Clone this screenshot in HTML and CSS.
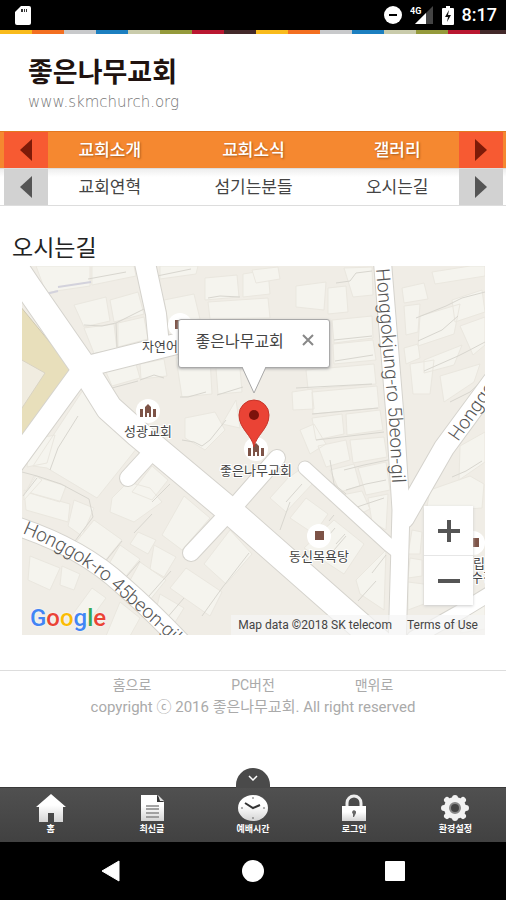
FILE: index.html
```html
<!DOCTYPE html>
<html lang="ko">
<head>
  <meta charset="UTF-8">
  <meta name="viewport" content="width=device-width, initial-scale=1.0">
  <title>좋은나무교회</title>
  <link rel="stylesheet" href="styles.css">
</head>
<body>

  <div class="status-bar">
    <svg class="status-card" width="16" height="19" viewBox="0 0 16 19"><path d="M6 0h8a2 2 0 0 1 2 2v15a2 2 0 0 1-2 2H2a2 2 0 0 1-2-2V6z" fill="#fff"/><path d="M6 3h2v3H6zM9 3h1v3H9zM11 3h1v3h-1z" fill="#333"/></svg>
    <div class="status-right">
      <svg width="18" height="18" viewBox="0 0 18 18"><circle cx="9" cy="9" r="9" fill="#fff"/><path d="M5 9h8" stroke="#000" stroke-width="2"/></svg>
      <svg width="24" height="20" viewBox="0 0 24 20">
        <path d="M23 1v18H5z" fill="#444"/><path d="M16 8v11H5z" fill="#fff"/>
        <text class="status-4g" x="0" y="9">4G</text>
      </svg>
      <svg width="12" height="19" viewBox="0 0 12 19"><path d="M4 0h4v2h3a1 1 0 0 1 1 1v15a1 1 0 0 1-1 1H1a1 1 0 0 1-1-1V3a1 1 0 0 1 1-1h3z" fill="#fff"/><path d="M7 4 3 11h3l-1 5 4-7H6z" fill="#111"/></svg>
      <span class="clock">8:17</span>
    </div>
  </div>

  <div class="stripes"></div>

  <header class="header">
    <a class="logo" href="#">
      <span class="logo-name">좋은나무교회</span>
      <span class="logo-url">www.skmchurch.org</span>
    </a>
  </header>

  <nav class="menu menu-main">
    <button class="arrow" type="button" aria-label="이전"><svg width="12" height="22" viewBox="0 0 12 22"><path d="M12 0v22L0 11z"/></svg></button>
    <ul>
      <li><a href="#">교회소개</a></li>
      <li><a href="#">교회소식</a></li>
      <li><a href="#">갤러리</a></li>
    </ul>
    <button class="arrow" type="button" aria-label="다음"><svg width="12" height="22" viewBox="0 0 12 22"><path d="M0 0v22l12-11z"/></svg></button>
  </nav>
  <nav class="menu menu-sub">
    <button class="arrow" type="button" aria-label="이전"><svg width="12" height="22" viewBox="0 0 12 22"><path d="M12 0v22L0 11z"/></svg></button>
    <ul>
      <li><a href="#">교회연혁</a></li>
      <li><a href="#">섬기는분들</a></li>
      <li><a href="#">오시는길</a></li>
    </ul>
    <button class="arrow" type="button" aria-label="다음"><svg width="12" height="22" viewBox="0 0 12 22"><path d="M0 0v22l12-11z"/></svg></button>
  </nav>

  <main>
    <h1>오시는길</h1>
    <div class="map">
      <svg class="map-canvas" viewBox="22 266 463 369">
        <rect x="22" y="266" width="463" height="369" fill="#f0ede6"/>

        <!-- buildings -->
        <g class="building">
          <path d="M36 266l54 0 0 20-34 5-10 2zM92 266l42 0 2 10-44 9zM74 305l32-8 4 24-26 6zM110 300l28-8 6 22-30 8zM84 328l30-4 3 26-22 6zM118 323l26-6 4 22-30 8z"/>
          <path d="M160 266l38 0-2 8-36 5zM164 300l30-6 6 25-32 4zM205 278l32-3 2 22-34 3zM243 274l25-4 2 24-27 3zM208 302l60-4 2 20-60 1z"/>
          <path d="M106 372l30-8 4 14-28 8zM140 364l24-5 3 17-26 3zM176 358l34 0 2 36-30 3zM216 368l24 0 2 24-24 2zM185 418l30-6 10 18-20 20-20-12zM236 400l-14 24 18 4z"/>
          <path d="M252 270l26-3 2 12-24 4zM296 286l30-4-2 28-28-3zM328 288l18-2 2 26-20 2zM344 268l28-1 1 28-20 2zM332 320l40-4 1 22-39 5zM333 344l40-4 3 20-42 4zM306 370l68-6 2 20-68 5zM292 392l20-3 2 20-21 1zM312 392l65-6 2 22-66 6zM312 418l30-4 2 20-28 6zM346 414l34-4 3 20-36 5zM300 430l14-6 12 20-16 10zM318 446l28-6 4 20-24 7zM350 440l34-3 3 20-34 6z"/>
          <path d="M330 470l24-6 6 22-20 6zM358 468l28-6 4 28-24 5zM342 495l20-4 8 18-16 8zM368 498l20-4-2 36-14-8z"/>
          <path d="M402 288l22-5 4 16-24 4zM432 272l38-6 15 0 0 10-50 8zM404 306l16-2-2 28-12 3zM420 316l40-12-6 30-36 12zM452 300l30-10 3 22-30 10zM404 348l14-4 2 14-14 6zM410 364l24-4-4 34-17 0zM460 326l25-9 0 28-12 10zM440 376l40-12-6 18-30 20zM424 360l38-15-8 20-30 8z"/>
          <path d="M83 390l16 26 38 32-40 50-50-30-14-2zM30 440l25-5-8 28-20 4zM34 476l32 10-6 16-34-10zM24 490l10 4 36 10-2 18-42-12zM74 500l20 8-12 28-14-10z"/>
          <path d="M112 498l16-16 22 6 12 14-28 20-24-10zM152 466l16 14-16 20-20-8zM184 496l26 22-28 32-20-15zM138 532l18 8-8 14-18-10zM94 520l28 20-18 22-28-20zM120 545l20 14-18 22-16-12zM154 545l22 12-12 20-14-8zM140 562l26 18-16 20-22-16zM186 568l36 24-12 24-40-28zM230 530l22 24-26 30-22-20zM160 594l24 14-10 16-18-14z"/>
          <path d="M30 556l30 12-10 22-22-10zM62 566l18 8-6 16-14-5zM92 588l14 10-22 30-14-10zM120 602l20 16-10 18-24 0zM24 500l18-20-6-4-12 18z"/>
          <path d="M288 478l14-10 12 14-28 30-16-14zM306 498l22 16-14 20-24-16zM334 520l30 24-20 30-40-26zM356 580l30-30-2 60-24-16z"/>
          <path d="M460 446l25-14 0 30-26 18zM430 490l40-14 14 8-2 24-56 4zM412 530l10 2-2 22-12 0zM410 558l12 2 0 16-14 2zM408 582l16 2 0 20-16 6zM470 612l15-8 0 25-25 4z"/>
        </g>

        <!-- plot lines -->
        <g class="plot">
          <path d="M88 279l38-7M157 276l34-7M84 325l18 1 14-3 28-14M116 323l1 24M92 354l24-5 31-8M112 388l26-7M140 380l14-5 10 3M180 397h8l18-5M217 395l26-8M208 298l12-2 20 1M182 440l12 2 8 4 8-6 8-10 8-10M50 470l8-22 20-32M336 283l14-2 6-8 16-2M334 340l38-4M335 361l38-6M296 388l76-4M312 414l66-6M316 440l68-8"/>
          <path d="M416 318l30-12 16-8 23-6M418 341l24-11 16-14M424 371l34-15 8-4 19-10M450 402l20-10 15-14M452 477l14-6 16-10M170 484l-18 18M152 514l-18 19M122 541l-18 22M140 561l-19 22M171 571l-22 25M184 598l-18 21M249 553l-27 35-20 28M335 528l-12 14M346 536l-12 14M386 555l-14 18M376 581l-18 20M334 515l-5 6M345 534l-9 10M22 472l15 4 24 8 28 15 4 18-18 24M37 478l-14 18M290 502l-10 28M302 484l-16 18M346 490l20-6 20-4M354 508l30-10M344 470l20-5 24-5M330 460l4 24 12 10"/>
        </g>
        <path d="M46 294l12-3M58 287l33-5" stroke="#d3d2dc" stroke-width="2"/>

        <path d="M20 306l51 62-51 72z" fill="#e8dfbb" stroke="#cfc8b0"/>
        <path d="M20 359l25 14-25 38z" fill="#f0ece0" stroke="#d9d3c2"/>

        <!-- roads: grey casing below, white surface above -->
        <g class="road-edge">
          <path d="M10 260l18 27 18 26 34 49 14 22 15 24 29 26 92 77 126 111 40 35" stroke-width="28"/>
          <path d="M143 254l13 60 3 32" stroke-width="22"/>
          <path d="M88 366l92-23" stroke-width="22"/>
          <path d="M82 370l-70 96" stroke-width="22"/>
          <path d="M150 454l-22 24" stroke-width="18"/>
          <path d="M234 507l-43 46" stroke-width="18"/>
          <path d="M234 507l43-49" stroke-width="18"/>
          <path d="M305 468l84 77 10 8" stroke-width="15"/>
          <path d="M382 256l13 160 6 94-4 140" stroke-width="19"/>
          <path d="M494 380l-50 68-40 70" stroke-width="22"/>
          <path d="M414 638l46-26 36-22" stroke-width="16"/>
          <path d="M10 524q70 22 112 61 30 26 62 60" stroke-width="20"/>
        </g>
        <g class="road">
          <path d="M10 260l18 27 18 26 34 49 14 22 15 24 29 26 92 77 126 111 40 35" stroke-width="26"/>
          <path d="M143 254l13 60 3 32" stroke-width="20"/>
          <path d="M88 366l92-23" stroke-width="20"/>
          <path d="M82 370l-70 96" stroke-width="20"/>
          <path d="M150 454l-22 24" stroke-width="16"/>
          <path d="M234 507l-43 46" stroke-width="16"/>
          <path d="M234 507l43-49" stroke-width="16"/>
          <path d="M305 468l84 77 10 8" stroke-width="13"/>
          <path d="M382 256l13 160 6 94-4 140" stroke-width="17"/>
          <path d="M494 380l-50 68-40 70" stroke-width="20"/>
          <path d="M414 638l46-26 36-22" stroke-width="14"/>
          <path d="M10 524q70 22 112 61 30 26 62 60" stroke-width="18"/>
        </g>

        <!-- road names -->
        <defs>
          <path id="road-5" d="M376 269l13 150 5 100"/>
          <path id="road-45" d="M22 533q62 26 100 64 28 24 60 54"/>
          <path id="road-ne" d="M458 442l52-74"/>
        </defs>
        <g class="road-name">
          <text><textPath href="#road-5">Honggokjung-ro 5beon-gil</textPath></text>
          <text><textPath href="#road-45">Honggok-ro 45beon-gil</textPath></text>
          <text><textPath href="#road-ne">Honggok</textPath></text>
        </g>

        <!-- places -->
        <g fill="#fff">
          <circle cx="180" cy="325" r="12"/><circle cx="148" cy="411" r="12"/><circle cx="256" cy="449" r="12"/>
          <circle cx="319" cy="536" r="12"/><circle cx="473" cy="543" r="12"/>
        </g>
        <g fill="#7d5347">
          <path d="M175 320h6v9h-6z"/>
          <path id="church" d="M140 409h3v8h-3zM145 417v-10l3-3 3 3v10h-2v-4h-2v4zM153 409h3v8h-3z"/>
          <use href="#church" x="108" y="39"/>
          <path d="M315 531h9v9h-9zM472 538h7v9h-7z"/>
        </g>
        <g class="place">
          <text x="142" y="351">자연어린이집</text>
          <text x="148" y="436" text-anchor="middle">성광교회</text>
          <text x="256" y="475" text-anchor="middle">좋은나무교회</text>
          <text x="319" y="561" text-anchor="middle">동신목욕탕</text>
          <text x="473" y="568">립</text>
          <text x="471" y="582">수정</text>
        </g>

        <!-- marker -->
        <path d="M254 447c-2-12-15-18-15-32a15 15 0 0 1 30 0c0 14-13 20-15 32z" fill="#ea4335" stroke="#c5352a"/>
        <circle cx="254" cy="415" r="5" fill="#7c120b"/>
      </svg>

      <div class="info">
        <span>좋은나무교회</span>
        <button type="button" aria-label="닫기"><svg width="12" height="12" viewBox="0 0 12 12"><path d="M1 1l10 10M11 1L1 11" stroke="#888" stroke-width="2"/></svg></button>
        <svg class="info-tail" width="26" height="28" viewBox="0 0 26 28"><path d="M1 0l12 27L25 0z" fill="#fff"/><path d="M1 1l12 26L25 1" fill="none" stroke="#a9a9a9"/></svg>
      </div>

      <div class="zoom">
        <button type="button" aria-label="확대"><svg width="22" height="22" viewBox="0 0 22 22"><path d="M0 11h22M11 0v22" stroke="#555" stroke-width="4"/></svg></button>
        <button type="button" aria-label="축소"><svg width="22" height="22" viewBox="0 0 22 22"><path d="M0 11h22" stroke="#555" stroke-width="4"/></svg></button>
      </div>

      <a class="google" href="#"><span class="blue">G</span><span class="red">o</span><span class="yellow">o</span><span class="blue">g</span><span class="green">l</span><span class="red">e</span></a>
      <div class="credits">
        <span>Map data ©2018 SK telecom</span>
        <a href="#">Terms of Use</a>
      </div>
    </div>
  </main>

  <footer class="footer">
    <div class="footer-links">
      <a href="#">홈으로</a>
      <a href="#">PC버전</a>
      <a href="#">맨위로</a>
    </div>
    <p>copyright ⓒ 2016 좋은나무교회. All right reserved</p>
  </footer>

  <nav class="tabs">
    <button class="tabs-toggle" type="button" aria-label="메뉴 닫기"><svg width="10" height="6" viewBox="0 0 10 6"><path d="M1 1l4 4 4-4" fill="none" stroke="#fff" stroke-width="1.5"/></svg></button>
    <svg class="defs" width="0" height="0"><defs><linearGradient id="shine" x1="0" y1="0" x2="0" y2="1"><stop offset=".4" stop-color="#fff"/><stop offset="1" stop-color="#d4d4d4"/></linearGradient></defs></svg>
    <a href="#">
      <svg width="30" height="28" viewBox="0 0 30 28"><path d="M15 0l15 13h-3v15h-9v-9h-6v9H3V13H0z" fill="url(#shine)"/></svg>
      <span>홈</span>
    </a>
    <a href="#">
      <svg width="30" height="28" viewBox="0 0 30 28"><path d="M4 1h16l7 7v19H4z" fill="url(#shine)"/><path d="M20 1v7h7z" fill="#333"/><path d="M21 1l6 6h-4z" fill="#ddd"/><path d="M9 12h13M9 15h13M9 19h13M9 23h13" stroke="#888" stroke-width="1.5"/></svg>
      <span>최신글</span>
    </a>
    <a href="#">
      <svg width="30" height="28" viewBox="0 0 30 28"><ellipse cx="15" cy="14" rx="15" ry="13" fill="url(#shine)"/><path d="M7 9l8 5 7-3" fill="none" stroke="#333" stroke-width="2"/><path d="M15 3v2M15 23v2M3 14h2M25 14h2" stroke="#666"/></svg>
      <span>예배시간</span>
    </a>
    <a href="#">
      <svg width="30" height="28" viewBox="0 0 30 28"><path d="M8 13V9a7 7 0 0 1 14 0v4" fill="none" stroke="#eee" stroke-width="3"/><path d="M3 12h24v15H3z" fill="url(#shine)"/><path d="M14 23v-3a2 2 0 1 1 3-1l-2 4z" fill="#666"/></svg>
      <span>로그인</span>
    </a>
    <a href="#">
      <svg width="30" height="28" viewBox="0 0 30 28"><circle cx="15" cy="14" r="11" fill="#f2f2f2"/><g stroke="#f2f2f2" stroke-width="6" stroke-linecap="round"><path d="M15 4v20M4 14h22M7 6l16 16M23 6L7 22"/></g><circle cx="15" cy="14" r="5" fill="#444" stroke="#888" stroke-width="2"/></svg>
      <span>환경설정</span>
    </a>
  </nav>

  <div class="system-nav">
    <button type="button" aria-label="뒤로"><svg width="20" height="22" viewBox="0 0 20 22"><path d="M18 1v20L1 11z" fill="#fff" stroke="#fff" stroke-linejoin="round"/></svg></button>
    <button type="button" aria-label="홈 화면"><svg width="22" height="22" viewBox="0 0 22 22"><circle cx="11" cy="11" r="11" fill="#fff"/></svg></button>
    <button type="button" aria-label="최근 앱"><svg width="20" height="20" viewBox="0 0 20 20"><rect width="20" height="20" rx="1" fill="#fff"/></svg></button>
  </div>

</body>
</html>
```
FILE: styles.css
```css
* { box-sizing: border-box; }
body {
  margin: 0;
  min-height: 100vh;
  display: flex;
  flex-direction: column;
  background: #fff;
  color: #222;
  font-family: Roboto, "Noto Sans CJK KR", sans-serif;
}
a { color: inherit; text-decoration: none; }
button { border: 0; padding: 0; background: none; font: inherit; cursor: pointer; }
svg { display: block; }

.status-bar {
  height: 30px;
  padding: 0 9px 0 15px;
  display: flex;
  align-items: center;
  justify-content: space-between;
  background: #000;
}
.status-right { display: flex; align-items: center; gap: 8px; }
.status-4g { font-size: 9px; font-weight: 700; fill: #fff; }
.clock { color: #fff; font-size: 18px; font-weight: 500; line-height: 30px; }

.stripes {
  height: 4px;
  background: repeating-linear-gradient(90deg,
    #f9bb1c 0 32px, #f36f21 32px 64px, #c8c9cb 64px 96px, #1c7fc0 96px 128px,
    #c9cbab 128px 160px, #959a3b 160px 192px, #ba1731 192px 224px, #43292a 224px 256px);
}

.header { padding: 20px 28px 19px; }
.logo { display: inline-flex; flex-direction: column; }
.logo-name { font-size: 27px; font-weight: 700; line-height: 38px; color: #20120f; }
.logo-url { font-family: "DejaVu Sans", sans-serif; font-size: 15px; font-weight: 200; line-height: 20px; color: #777; }

.menu { display: flex; padding: 0 3px 0 4px; font-size: 17px; }
.menu ul {
  flex: 1;
  display: flex;
  margin: 0 -10px;
  padding: 0;
  list-style: none;
  text-align: center;
}
.menu li { flex: 1; line-height: 36px; }
.arrow {
  position: relative;
  width: 44px;
  display: flex;
  align-items: center;
  justify-content: center;
}
.menu-main {
  background: #f58830;
  border-top: 1px solid #e37820;
  color: #fff;
  font-weight: 500;
  text-shadow: 1px 1px 2px #a85a1c;
}
.menu-main .arrow { background: #f75a32; fill: #7d1b08; }
.menu-sub {
  border-top: 1px solid #ddd;
  border-bottom: 1px solid #ddd;
  background: linear-gradient(#eee, #fff 8px);
  color: #444;
}
.menu-sub .arrow { background: #d2d2d2; fill: #555; }

h1 { margin: 0; padding: 25px 12px 0; font-size: 23px; font-weight: 400; line-height: 35px; }
.map { position: relative; margin: 0 21px 0 22px; overflow: hidden; }
.map-canvas { width: 100%; height: auto; fill: none; }
.building { fill: #f5f4ee; stroke: #eae7df; }
.plot { stroke: #d8d6cf; }
.road-edge { stroke: #d5d3cd; stroke-linecap: round; stroke-linejoin: round; }
.road { stroke: #fff; stroke-linecap: round; stroke-linejoin: round; }
.road-name { fill: #555; font-size: 19px; font-weight: 300; }
.place { fill: #444; stroke: #fff; stroke-width: 2px; paint-order: stroke; font-size: 13px; }

.info {
  position: absolute;
  left: 50%;
  bottom: 65%;
  width: 152px;
  height: 49px;
  margin-bottom: 27px;
  padding: 0 15px 8px 17px;
  transform: translateX(-50%);
  display: flex;
  align-items: center;
  justify-content: space-between;
  background: #fff;
  border: 1px solid #a9a9a9;
  border-radius: 3px;
  box-shadow: 0 1px 3px #aaa;
  color: #444;
  font-size: 16px;
}
.info-tail { position: absolute; top: 100%; left: 50%; transform: translateX(-50%); margin-top: -1px; }

.zoom {
  position: absolute;
  right: 12px;
  bottom: 30px;
  width: 49px;
  background: #fff;
  box-shadow: 0 1px 3px #ccc;
}
.zoom button { width: 100%; height: 49px; display: grid; place-items: center; }
.zoom button + button { height: 50px; border-top: 1px solid #e6e6e6; }

.google { position: absolute; left: 8px; bottom: 3px; font-size: 24px; line-height: 28px; font-weight: 500; text-shadow: 0 0 2px #fff; }
.blue { color: #4285f4; }
.red { color: #ea4335; }
.yellow { color: #fbbc05; }
.green { color: #34a853; }
.credits {
  position: absolute;
  right: 0;
  bottom: 0;
  padding: 0 7px;
  display: flex;
  gap: 15px;
  background: rgba(245, 245, 245, 0.7);
  color: #444;
  font-size: 12px;
  line-height: 20px;
}

.footer {
  flex: 1;
  margin-top: 35px;
  padding-top: 3px;
  border-top: 1px solid #ddd;
  color: #aaa;
  font-size: 14px;
  text-align: center;
}
.footer-links { display: flex; justify-content: center; line-height: 22px; }
.footer-links a { width: 121px; }
.footer p { margin: 0; font-size: 15px; line-height: 22px; }

.tabs {
  position: relative;
  height: 55px;
  display: flex;
  background: linear-gradient(#505050, #414141);
  border-top: 1px solid #3a3a3a;
}
.tabs a {
  position: relative;
  flex: 1;
  padding-top: 6px;
  display: flex;
  flex-direction: column;
  align-items: center;
  color: #fff;
  font-size: 9px;
  font-weight: 700;
  line-height: 14px;
}
.tabs-toggle {
  position: absolute;
  left: 50%;
  bottom: 100%;
  width: 34px;
  height: 20px;
  transform: translateX(-50%);
  display: grid;
  place-items: center;
  background: #4a4a4a;
  border-radius: 17px 17px 0 0;
}
.defs { position: absolute; }

.system-nav { height: 58px; padding: 0 40px; display: flex; background: #000; }
.system-nav button { flex: 1; display: grid; place-items: center; }
```
